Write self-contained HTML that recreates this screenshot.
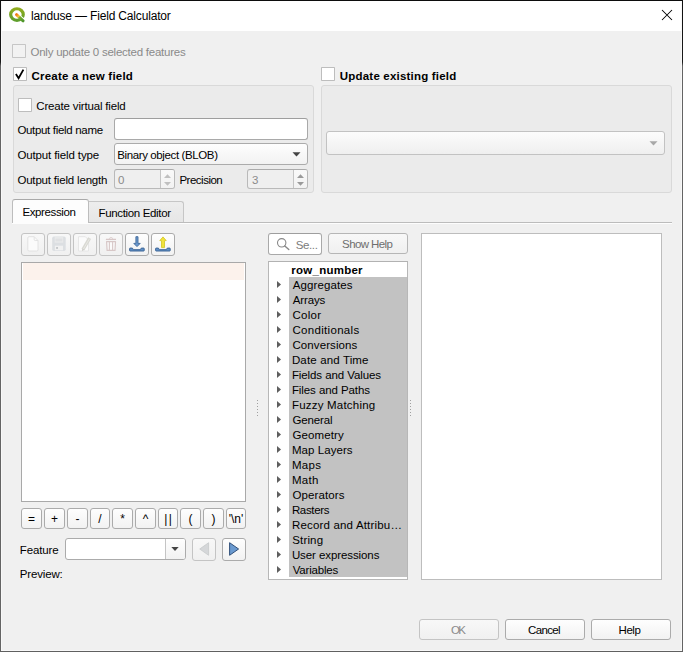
<!DOCTYPE html>
<html lang="en">
<head>
<meta charset="utf-8">
<title>landuse — Field Calculator</title>
<style>
html,body{margin:0;padding:0;}
body{width:683px;height:652px;overflow:hidden;background:#f0f0f0;position:relative;
  font-family:"Liberation Sans",sans-serif;font-size:12px;color:#000;}
*{box-sizing:border-box;}
.abs,.t,.btn,.cb,.field,.grp{position:absolute;}
.t{white-space:nowrap;line-height:14px;font-size:11.5px;}
.b{font-weight:700;}
.dis{color:#8a8a8a;}
#frame2{left:1px;top:1px;width:681px;height:650px;border:1px solid #f8f8f8;border-top-color:#fff;z-index:49;pointer-events:none;}
#titlebar{left:1px;top:1px;width:681px;height:30px;background:#fff;}
.cb{width:14px;height:14px;border:1px solid #bdbdbd;background:#fff;border-radius:0.8px;}
.cb.off{background:#f2f2f2;border-color:#c6c6c6;}
.grp{border:1px solid #d9d9d9;background:#ebebeb;border-radius:3px;}
.field{border:1px solid #a9a9a9;border-top-color:#9e9e9e;background:#fff;border-radius:3px;}
.btn{border:1px solid #ababab;border-radius:3px;background:linear-gradient(#fefefe,#f2f2f2);text-align:center;}
.btn.d{border-color:#c4c4c4;background:linear-gradient(#f8f8f8,#f0f0f0);}
.combo{border:1px solid #ababab;border-radius:3px;background:linear-gradient(#fefefe,#f2f2f2);}
svg{position:absolute;overflow:visible;}
.row{position:absolute;left:289px;width:118px;height:15px;background:#c2c2c2;}
.li{left:292px;}
</style>
</head>
<body>
<div id="titlebar" class="abs"></div>
<!-- QGIS icon -->
<svg style="left:8px;top:6px" width="18" height="18" viewBox="0 0 18 18">
  <defs>
    <linearGradient id="qg" x1="0" y1="0" x2="0" y2="1"><stop offset="0" stop-color="#8fab1d"/><stop offset="1" stop-color="#5f9f2c"/></linearGradient>
    <linearGradient id="qt" x1="0" y1="0" x2="1" y2="1"><stop offset="0" stop-color="#f07d14"/><stop offset="0.3" stop-color="#f4c63a"/><stop offset="0.45" stop-color="#7aae2c"/><stop offset="1" stop-color="#4e962b"/></linearGradient>
  </defs>
  <ellipse cx="8.95" cy="8.55" rx="6.3" ry="5.8" fill="none" stroke="url(#qg)" stroke-width="3.2"/>
  <line x1="12" y1="10.9" x2="16" y2="14.6" stroke="#fff" stroke-width="3.4" stroke-linecap="butt"/>
  <line x1="8.5" y1="8.7" x2="15.1" y2="14.8" stroke="url(#qt)" stroke-width="3" stroke-linecap="round"/>
</svg>
<div class="t" style="left:31px;top:9px;letter-spacing:-0.17px;font-size:12px">landuse — Field Calculator</div>
<svg style="left:662px;top:10px" width="10" height="10" viewBox="0 0 10 10"><path d="M0 0L10 10M10 0L0 10" stroke="#000" stroke-width="1.05" fill="none"/></svg>

<!-- row 1 -->
<div class="cb off" style="left:12px;top:44px"></div>
<div class="t dis" style="left:30.5px;top:45px;letter-spacing:-0.24px">Only update 0 selected features</div>

<!-- row 2 -->
<div class="cb" style="left:13px;top:67px"></div>
<svg style="left:13px;top:67px" width="14" height="14" viewBox="0 0 14 14"><path d="M2.9 6.9L5.6 11.2L10.4 2.6" stroke="#000" stroke-width="1.8" fill="none" stroke-linejoin="miter"/></svg>
<div class="t b" style="left:31.5px;top:69px;letter-spacing:0.21px">Create a new field</div>
<div class="cb" style="left:321px;top:67px"></div>
<div class="t b" style="left:339.8px;top:69px;letter-spacing:0.2px">Update existing field</div>

<!-- left group -->
<div class="grp" style="left:13px;top:85px;width:301px;height:108px"></div>
<div class="cb" style="left:18px;top:98px"></div>
<div class="t" style="left:36.3px;top:99px;letter-spacing:-0.17px">Create virtual field</div>
<div class="t" style="left:17.4px;top:123px;letter-spacing:-0.32px">Output field name</div>
<div class="field" style="left:114px;top:118px;width:194px;height:22px"></div>
<div class="t" style="left:17.4px;top:148px;letter-spacing:-0.12px">Output field type</div>
<div class="combo abs" style="left:114px;top:143px;width:194px;height:22px"></div>
<div class="t" style="left:117.2px;top:148px;letter-spacing:-0.38px">Binary object (BLOB)</div>
<svg style="left:292px;top:152px" width="9" height="5" viewBox="0 0 9 5"><path d="M0.5 0.3H8.5L4.5 4.6Z" fill="#444"/></svg>
<div class="t" style="left:17.4px;top:173px;letter-spacing:-0.18px">Output field length</div>
<div class="field" style="left:114px;top:169px;width:61px;height:20px;background:#efefef;border-color:#b9b9b9;border-top-color:#aaa"></div>
<div class="abs" style="left:160px;top:170px;width:14px;height:18px;border-left:1px solid #c4c4c4;background:linear-gradient(#f9f9f9,#f2f2f2);border-radius:0 2px 2px 0"></div>
<div class="t dis" style="left:118px;top:173px">0</div>
<svg style="left:164px;top:174px" width="7" height="12" viewBox="0 0 7 12"><path d="M0 4L3.5 0.3L7 4Z M0 8L3.5 11.7L7 8Z" fill="#c0c0c0"/></svg>
<div class="t" style="left:179.4px;top:173px;letter-spacing:-0.49px">Precision</div>
<div class="field" style="left:247px;top:169px;width:61px;height:20px;background:#efefef;border-color:#b9b9b9;border-top-color:#aaa"></div>
<div class="abs" style="left:293px;top:170px;width:14px;height:18px;border-left:1px solid #c4c4c4;background:linear-gradient(#f9f9f9,#f2f2f2);border-radius:0 2px 2px 0"></div>
<div class="t dis" style="left:252px;top:173px">3</div>
<svg style="left:297px;top:174px" width="7" height="12" viewBox="0 0 7 12"><path d="M0 4L3.5 0.3L7 4Z M0 8L3.5 11.7L7 8Z" fill="#9a9a9a"/></svg>

<!-- right group -->
<div class="grp" style="left:321px;top:85px;width:351px;height:108px"></div>
<div class="combo abs" style="left:326px;top:131px;width:339px;height:24px;border-color:#c2c2c2;background:linear-gradient(#fcfcfc,#efefef)"></div>
<svg style="left:649px;top:141px" width="9" height="5" viewBox="0 0 9 5"><path d="M0.5 0.3H8.5L4.5 4.6Z" fill="#a8a8a8"/></svg>

<!-- tabs -->
<div class="abs" style="left:12px;top:222px;width:660px;height:1px;background:#bcbcbc"></div>
<div class="abs" style="left:12px;top:223px;width:660px;height:1px;background:#fdfdfd"></div>
<div class="abs" style="left:88px;top:201px;width:96px;height:21px;border:1px solid #c6c6c6;border-bottom:none;border-left:none;border-radius:0 3px 0 0;background:linear-gradient(#ededed,#e6e6e6)"></div>
<div class="abs" style="left:12px;top:199px;width:77px;height:24px;border:1px solid #bdbdbd;border-top-color:#a9a9a9;border-bottom:none;border-radius:3px 3px 0 0;background:#fdfdfd"></div>
<div class="t" style="left:22.4px;top:205px;letter-spacing:-0.37px">Expression</div>
<div class="t" style="left:98.6px;top:206px;letter-spacing:-0.35px">Function Editor</div>

<!-- toolbar -->
<div class="btn d" style="left:21px;top:233px;width:24px;height:23px"></div>
<svg style="left:21px;top:233px" width="24" height="23" viewBox="0 0 24 23"><path d="M8 3.7H13.2L17 7.5V16.8Q17 18 15.8 18H8Q6.8 18 6.8 16.8V4.9Q6.8 3.7 8 3.7Z" fill="#fbfbfb" stroke="#e2e2e2" stroke-width="1"/><path d="M13.2 3.7V6.5Q13.2 7.5 14.2 7.5H17" fill="none" stroke="#e2e2e2" stroke-width="1"/></svg>
<div class="btn d" style="left:47px;top:233px;width:24px;height:23px"></div>
<svg style="left:47px;top:233px" width="24" height="23" viewBox="0 0 24 23"><rect x="5.2" y="3.6" width="13.5" height="14.3" rx="1.6" fill="#dcdfe2"/><rect x="7.7" y="4.2" width="8.5" height="5.4" fill="#ebecec"/><rect x="8.4" y="5.5" width="7" height="3" fill="#e0e1e3"/><rect x="7.9" y="12.7" width="8.1" height="4.6" fill="#f1f1f1"/><rect x="9.2" y="14" width="1.7" height="1.9" fill="#bfc2c5"/></svg>
<div class="btn d" style="left:73px;top:233px;width:24px;height:23px"></div>
<svg style="left:73px;top:233px" width="24" height="23" viewBox="0 0 24 23"><path d="M5.5 3.7H12.3L15.5 6.9V18H5.5Z" fill="#fbfbfb" stroke="#e6e6e6" stroke-width="1"/><path d="M9.9 16.6L16.6 5.2" stroke="#d9d9d3" stroke-width="3.3" fill="none"/><path d="M10.3 16.2L16.4 5.8" stroke="#e9e9e5" stroke-width="1" fill="none"/><path d="M8.9 18.2L9.3 15.6L11.4 16.8Z" fill="#d0d0cc"/></svg>
<div class="btn d" style="left:99px;top:233px;width:24px;height:23px"></div>
<svg style="left:99px;top:233px" width="24" height="23" viewBox="0 0 24 23"><path d="M6.9 6.4H17" stroke="#d7c7c7" stroke-width="1.3" fill="none"/><path d="M10.4 5.9Q10.4 4.5 12 4.5Q13.7 4.5 13.7 5.9" stroke="#dccece" stroke-width="0.9" fill="none"/><path d="M7.6 8.6L8.1 17.4H16L16.5 8.6Z" fill="#fbfbfb" stroke="#d7c7c7" stroke-width="1.2" stroke-linejoin="round"/><path d="M10.4 9V17M13.6 9V17" stroke="#d9caca" stroke-width="1.2" fill="none"/></svg>
<div class="btn" style="left:125px;top:233px;width:24px;height:23px"></div>
<svg style="left:125px;top:233px" width="24" height="23" viewBox="0 0 24 23"><path d="M4.6 15.6Q4.6 15.1 5.1 15.1H7.4L8.4 16.7H15.3L16.3 15.1H18.7Q19.2 15.1 19.2 15.6V17.5Q19.2 18 18.7 18H5.1Q4.6 18 4.6 17.5Z" fill="#5f8fc7" stroke="#3f6797" stroke-width="1" stroke-linejoin="round"/><path d="M10.9 3.7H13V10.4H15.2L12 13.6L8.8 10.4H10.9Z" fill="#6a98cd" stroke="#41699a" stroke-width="0.9" stroke-linejoin="round"/></svg>
<div class="btn" style="left:151px;top:233px;width:24px;height:23px"></div>
<svg style="left:151px;top:233px" width="24" height="23" viewBox="0 0 24 23"><path d="M10.5 14.6V7.6H8.8L12 3.9L15.2 7.6H13.5V14.6Z" fill="#f1e33c" stroke="#d6ca2f" stroke-width="0.9" stroke-linejoin="round"/><path d="M4.6 15.6Q4.6 15.1 5.1 15.1H7.4L8.4 16.7H15.3L16.3 15.1H18.7Q19.2 15.1 19.2 15.6V17.5Q19.2 18 18.7 18H5.1Q4.6 18 4.6 17.5Z" fill="#5f8fc7" stroke="#3f6797" stroke-width="1" stroke-linejoin="round"/></svg>

<!-- editor -->
<div class="abs" style="left:21px;top:262px;width:225px;height:240px;border:1px solid #a9a9a9;background:#fff"></div>
<div class="abs" style="left:23px;top:263px;width:221px;height:17px;background:#fcf2ec"></div>

<!-- operator buttons -->
<div id="ops">
<div class="btn" style="left:21px;top:508px;width:21px;height:21px;line-height:20px;font-size:12px">=</div>
<div class="btn" style="left:44px;top:508px;width:21px;height:21px;line-height:20px;font-size:12px">+</div>
<div class="btn" style="left:67px;top:508px;width:21px;height:21px;line-height:20px;font-size:12px">-</div>
<div class="btn" style="left:90px;top:508px;width:20px;height:21px;line-height:20px;font-size:12px">/</div>
<div class="btn" style="left:112px;top:508px;width:21px;height:21px;line-height:20px;font-size:12px">*</div>
<div class="btn" style="left:135px;top:508px;width:21px;height:21px;line-height:20px;font-size:12px">^</div>
<div class="btn" style="left:158px;top:508px;width:20px;height:21px;line-height:20px;font-size:12px"><span style="letter-spacing:1.4px;margin-right:-1.4px">||</span></div>
<div class="btn" style="left:180px;top:508px;width:21px;height:21px;line-height:20px;font-size:12px">(</div>
<div class="btn" style="left:203px;top:508px;width:21px;height:21px;line-height:20px;font-size:12px">)</div>
<div class="btn" style="left:226px;top:508px;width:20px;height:21px;line-height:20px;font-size:12px">'\n'</div>
</div>

<!-- feature row -->
<div class="t" style="left:19.8px;top:543px;letter-spacing:-0.15px">Feature</div>
<div class="combo abs" style="left:65px;top:538px;width:121px;height:22px;background:#fff"></div>
<div class="abs" style="left:165px;top:539px;width:20px;height:20px;border-left:1px solid #c4c4c4;border-radius:0 2px 2px 0;background:linear-gradient(#fefefe,#f2f2f2)"></div>
<svg style="left:171px;top:547px" width="8" height="4" viewBox="0 0 8 4"><path d="M0.3 0.1H7.7L4 3.9Z" fill="#444"/></svg>
<div class="btn d" style="left:192px;top:538px;width:24px;height:23px"></div>
<svg style="left:199px;top:542px" width="11" height="14" viewBox="0 0 11 14"><path d="M9.6 0.7V13.3L0.7 7Z" fill="#d5d7d9" stroke="#c3c5c7" stroke-width="0.7"/></svg>
<div class="btn" style="left:222px;top:538px;width:24px;height:23px"></div>
<svg style="left:229px;top:542px" width="11" height="14" viewBox="0 0 11 14"><path d="M0.6 0.7V13.3L9.6 7Z" fill="#6a9ad0" stroke="#31507a" stroke-width="1" stroke-linejoin="round"/></svg>
<div class="t" style="left:19.8px;top:567px;letter-spacing:-0.16px">Preview:</div>

<!-- search + show help -->
<div class="field" style="left:268px;top:233px;width:54px;height:22px"></div>
<svg style="left:276px;top:237px" width="14" height="14" viewBox="0 0 14 14"><circle cx="5.7" cy="5.8" r="4.2" fill="none" stroke="#888" stroke-width="1.1"/><path d="M8.8 8.9L12.8 12.5" stroke="#888" stroke-width="1.4" stroke-linecap="round"/></svg>
<div class="t" style="left:295.8px;top:238px;letter-spacing:-0.4px;color:#7c7c7c">Se...</div>
<div class="btn d" style="left:328px;top:233px;width:80px;height:21px;border-color:#b6b6b6"></div>
<div class="t" style="left:342.1px;top:237px;letter-spacing:-0.61px;color:#6e6e6e">Show Help</div>

<!-- list -->
<div class="abs" style="left:268px;top:261px;width:140px;height:319px;border:1px solid #b7b7b7;border-top-color:#b2b2b2;background:#fff"></div>
<div id="list">
<div class="t b" style="left:291.3px;top:263px;letter-spacing:0.25px">row_number</div>
<div class="row" style="top:277px"></div>
<svg style="left:277px;top:281px" width="4" height="7" viewBox="0 0 4 7"><path d="M0 0L4 3.5L0 7Z" fill="#5e5e5e"/></svg>
<div class="t" style="left:292.7px;top:278px;letter-spacing:0.12px">Aggregates</div>
<div class="row" style="top:292px"></div>
<svg style="left:277px;top:296px" width="4" height="7" viewBox="0 0 4 7"><path d="M0 0L4 3.5L0 7Z" fill="#5e5e5e"/></svg>
<div class="t" style="left:292.7px;top:293px;letter-spacing:-0.12px">Arrays</div>
<div class="row" style="top:307px"></div>
<svg style="left:277px;top:311px" width="4" height="7" viewBox="0 0 4 7"><path d="M0 0L4 3.5L0 7Z" fill="#5e5e5e"/></svg>
<div class="t" style="left:292.4px;top:308px;letter-spacing:0.28px">Color</div>
<div class="row" style="top:322px"></div>
<svg style="left:277px;top:326px" width="4" height="7" viewBox="0 0 4 7"><path d="M0 0L4 3.5L0 7Z" fill="#5e5e5e"/></svg>
<div class="t" style="left:292.4px;top:323px;letter-spacing:0.32px">Conditionals</div>
<div class="row" style="top:337px"></div>
<svg style="left:277px;top:341px" width="4" height="7" viewBox="0 0 4 7"><path d="M0 0L4 3.5L0 7Z" fill="#5e5e5e"/></svg>
<div class="t" style="left:292.4px;top:338px;letter-spacing:0.1px">Conversions</div>
<div class="row" style="top:352px"></div>
<svg style="left:277px;top:356px" width="4" height="7" viewBox="0 0 4 7"><path d="M0 0L4 3.5L0 7Z" fill="#5e5e5e"/></svg>
<div class="t" style="left:291.9px;top:353px;letter-spacing:0.15px">Date and Time</div>
<div class="row" style="top:367px"></div>
<svg style="left:277px;top:371px" width="4" height="7" viewBox="0 0 4 7"><path d="M0 0L4 3.5L0 7Z" fill="#5e5e5e"/></svg>
<div class="t" style="left:291.9px;top:368px;letter-spacing:-0.09px">Fields and Values</div>
<div class="row" style="top:382px"></div>
<svg style="left:277px;top:386px" width="4" height="7" viewBox="0 0 4 7"><path d="M0 0L4 3.5L0 7Z" fill="#5e5e5e"/></svg>
<div class="t" style="left:291.9px;top:383px;letter-spacing:-0.08px">Files and Paths</div>
<div class="row" style="top:397px"></div>
<svg style="left:277px;top:401px" width="4" height="7" viewBox="0 0 4 7"><path d="M0 0L4 3.5L0 7Z" fill="#5e5e5e"/></svg>
<div class="t" style="left:291.9px;top:398px;letter-spacing:0.21px">Fuzzy Matching</div>
<div class="row" style="top:412px"></div>
<svg style="left:277px;top:416px" width="4" height="7" viewBox="0 0 4 7"><path d="M0 0L4 3.5L0 7Z" fill="#5e5e5e"/></svg>
<div class="t" style="left:292.4px;top:413px;letter-spacing:-0.13px">General</div>
<div class="row" style="top:427px"></div>
<svg style="left:277px;top:431px" width="4" height="7" viewBox="0 0 4 7"><path d="M0 0L4 3.5L0 7Z" fill="#5e5e5e"/></svg>
<div class="t" style="left:292.4px;top:428px;letter-spacing:0.13px">Geometry</div>
<div class="row" style="top:442px"></div>
<svg style="left:277px;top:446px" width="4" height="7" viewBox="0 0 4 7"><path d="M0 0L4 3.5L0 7Z" fill="#5e5e5e"/></svg>
<div class="t" style="left:291.9px;top:443px;letter-spacing:0.07px">Map Layers</div>
<div class="row" style="top:457px"></div>
<svg style="left:277px;top:461px" width="4" height="7" viewBox="0 0 4 7"><path d="M0 0L4 3.5L0 7Z" fill="#5e5e5e"/></svg>
<div class="t" style="left:291.9px;top:458px;letter-spacing:0.35px">Maps</div>
<div class="row" style="top:472px"></div>
<svg style="left:277px;top:476px" width="4" height="7" viewBox="0 0 4 7"><path d="M0 0L4 3.5L0 7Z" fill="#5e5e5e"/></svg>
<div class="t" style="left:291.9px;top:473px;letter-spacing:0.35px">Math</div>
<div class="row" style="top:487px"></div>
<svg style="left:277px;top:491px" width="4" height="7" viewBox="0 0 4 7"><path d="M0 0L4 3.5L0 7Z" fill="#5e5e5e"/></svg>
<div class="t" style="left:292.4px;top:488px;letter-spacing:0.11px">Operators</div>
<div class="row" style="top:502px"></div>
<svg style="left:277px;top:506px" width="4" height="7" viewBox="0 0 4 7"><path d="M0 0L4 3.5L0 7Z" fill="#5e5e5e"/></svg>
<div class="t" style="left:291.9px;top:503px;letter-spacing:-0.35px">Rasters</div>
<div class="row" style="top:517px"></div>
<svg style="left:277px;top:521px" width="4" height="7" viewBox="0 0 4 7"><path d="M0 0L4 3.5L0 7Z" fill="#5e5e5e"/></svg>
<div class="t" style="left:291.9px;top:518px;letter-spacing:0.18px">Record and Attribu…</div>
<div class="row" style="top:532px"></div>
<svg style="left:277px;top:536px" width="4" height="7" viewBox="0 0 4 7"><path d="M0 0L4 3.5L0 7Z" fill="#5e5e5e"/></svg>
<div class="t" style="left:292.2px;top:533px;letter-spacing:0.17px">String</div>
<div class="row" style="top:547px"></div>
<svg style="left:277px;top:551px" width="4" height="7" viewBox="0 0 4 7"><path d="M0 0L4 3.5L0 7Z" fill="#5e5e5e"/></svg>
<div class="t" style="left:291.9px;top:548px;letter-spacing:-0.09px">User expressions</div>
<div class="row" style="top:562px"></div>
<svg style="left:277px;top:566px" width="4" height="7" viewBox="0 0 4 7"><path d="M0 0L4 3.5L0 7Z" fill="#5e5e5e"/></svg>
<div class="t" style="left:292.7px;top:563px;letter-spacing:-0.18px">Variables</div>
</div>

<!-- splitter dots -->
<div id="dots">
<div class="abs" style="left:257px;top:400px;width:1px;height:1px;background:#a0a0a0"></div>
<div class="abs" style="left:257px;top:403px;width:1px;height:1px;background:#a0a0a0"></div>
<div class="abs" style="left:257px;top:406px;width:1px;height:1px;background:#a0a0a0"></div>
<div class="abs" style="left:257px;top:409px;width:1px;height:1px;background:#a0a0a0"></div>
<div class="abs" style="left:257px;top:412px;width:1px;height:1px;background:#a0a0a0"></div>
<div class="abs" style="left:257px;top:415px;width:1px;height:1px;background:#a0a0a0"></div>
<div class="abs" style="left:410px;top:400px;width:1px;height:1px;background:#a0a0a0"></div>
<div class="abs" style="left:410px;top:403px;width:1px;height:1px;background:#a0a0a0"></div>
<div class="abs" style="left:410px;top:406px;width:1px;height:1px;background:#a0a0a0"></div>
<div class="abs" style="left:410px;top:409px;width:1px;height:1px;background:#a0a0a0"></div>
<div class="abs" style="left:410px;top:412px;width:1px;height:1px;background:#a0a0a0"></div>
<div class="abs" style="left:410px;top:415px;width:1px;height:1px;background:#a0a0a0"></div>
</div>

<!-- help panel -->
<div class="abs" style="left:421px;top:233px;width:241px;height:347px;border:1px solid #bdbdbd;background:#fff"></div>

<!-- bottom buttons -->
<div class="btn d" style="left:419px;top:619px;width:80px;height:21px"></div>
<div class="t dis" style="left:450.9px;top:623px;letter-spacing:-1.61px">OK</div>
<div class="btn" style="left:505px;top:619px;width:80px;height:21px"></div>
<div class="t" style="left:528.1px;top:623px;letter-spacing:-0.67px">Cancel</div>
<div class="btn" style="left:591px;top:619px;width:80px;height:21px"></div>
<div class="t" style="left:618.6px;top:623px;letter-spacing:-0.46px">Help</div>

<div id="frame2" class="abs"></div>
<div class="abs" style="left:0;top:0;width:683px;height:1px;background:#0c0c0c;z-index:60"></div>
<div class="abs" style="left:0;top:0;width:1px;height:652px;background:linear-gradient(#101010 0,#1a1a1a 62px,#646464 66px,#646464 100%);z-index:60"></div>
<div class="abs" style="left:682px;top:0;width:1px;height:652px;background:linear-gradient(#101010 0,#1a1a1a 62px,#646464 66px,#646464 100%);z-index:60"></div>
<div class="abs" style="left:0;top:651px;width:683px;height:1px;background:#606060;z-index:60"></div>
</body>
</html>
